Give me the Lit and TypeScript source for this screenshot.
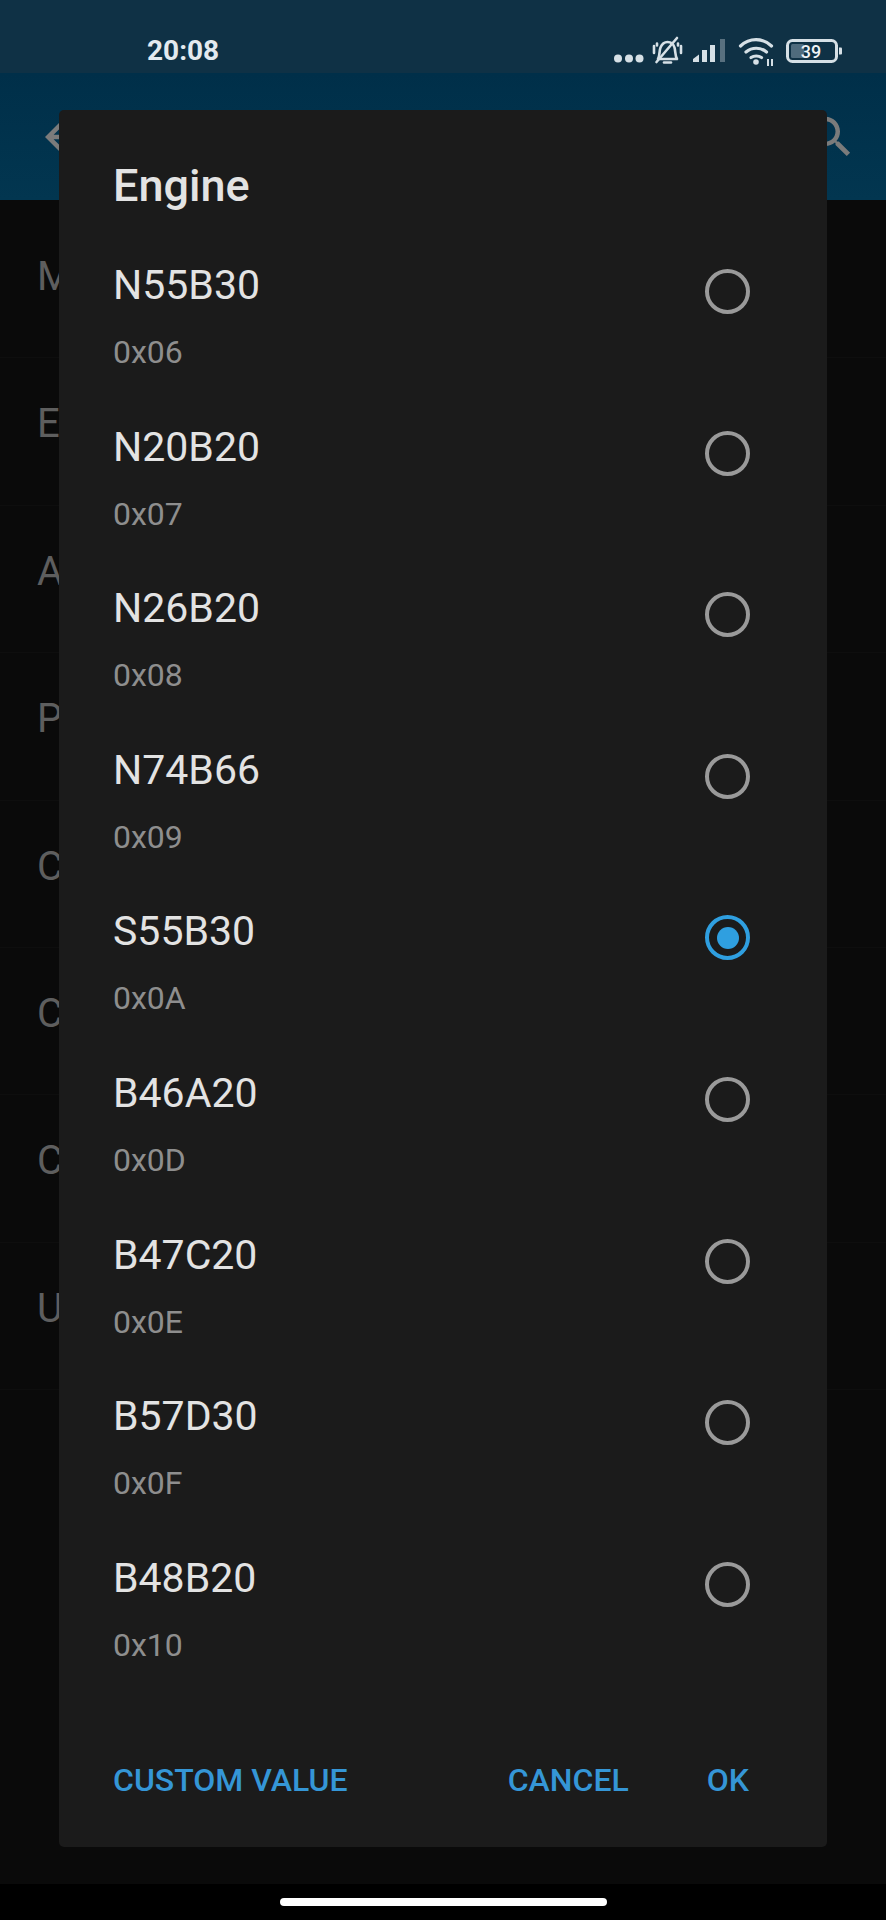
import { LitElement, html, css } from "lit";
import { customElement } from "lit/decorators.js";

const options = [
  { name: "N55B30", code: "0x06" },
  { name: "N20B20", code: "0x07" },
  { name: "N26B20", code: "0x08" },
  { name: "N74B66", code: "0x09" },
  { name: "S55B30", code: "0x0A", selected: true },
  { name: "B46A20", code: "0x0D" },
  { name: "B47C20", code: "0x0E" },
  { name: "B57D30", code: "0x0F" },
  { name: "B48B20", code: "0x10" },
];

const behind = ["M", "E", "A", "P", "C", "C", "C", "U"];

@customElement("app-root")
export class AppRoot extends LitElement {
  static styles = css`
    :host {
      display: block;
      width: 886px;
      height: 1920px;
      position: relative;
      overflow: hidden;
      background: #000;
      font-family: Roboto, "Liberation Sans", sans-serif;
    }

    .status {
      height: 73px;
      background: #0f3145;
      display: flex;
      align-items: flex-start;
      justify-content: space-between;
      padding: 30px 40px 0 147px;
      box-sizing: border-box;
      color: #e3eaef;
    }

    .time {
      font-size: 28px;
      font-weight: 700;
      line-height: 42px;
    }

    .status-icons {
      display: block;
    }

    .appbar {
      height: 127px;
      background: linear-gradient(#002f49, #023650);
      display: flex;
      align-items: center;
      justify-content: space-between;
      padding: 0 28px 0 36px;
      color: #7b7b7b;
    }

    .appbar svg {
      fill: currentColor;
    }

    .page {
      height: 1684px;
      background: #0a0a0a;
      padding-top: 11px;
      box-sizing: border-box;
    }

    .behind-row {
      height: 147.4px;
      box-sizing: border-box;
      padding: 42px 0 0 37px;
      border-bottom: 1px solid #0e0e0e;
      color: #5e5e5e;
      font-size: 40px;
      line-height: 47px;
    }

    .nav {
      height: 36px;
      background: #000;
      display: flex;
      justify-content: center;
      padding-top: 14px;
      box-sizing: border-box;
    }

    .pill {
      width: 327px;
      height: 8px;
      border-radius: 4px;
      background: #fff;
    }

    .dialog {
      position: absolute;
      left: 59px;
      top: 110px;
      width: 768px;
      height: 1737px;
      border-radius: 5px;
      background: #1b1b1b;
      display: flex;
      flex-direction: column;
      box-sizing: border-box;
      padding: 49px 0 50px 54px;
    }

    .title {
      font-size: 45px;
      font-weight: 500;
      line-height: 53px;
      color: #e3e3e3;
      margin-bottom: 47px;
    }

    .option {
      height: 161.6px;
      flex: none;
      display: flex;
      align-items: flex-start;
      justify-content: space-between;
      padding-right: 77px;
    }

    .name {
      font-size: 41px;
      line-height: 47px;
      color: #e3e3e3;
      margin-top: 3px;
    }

    .code {
      font-size: 32px;
      line-height: 36px;
      color: #8e8e8e;
      margin-top: 25px;
    }

    .radio {
      width: 45px;
      height: 45px;
      border: 4px solid #9a9a9a;
      border-radius: 50%;
      box-sizing: border-box;
      margin-top: 10px;
      display: flex;
      align-items: center;
      justify-content: center;
    }

    .radio.on {
      border-color: #2f9fe0;
    }

    .radio.on::after {
      content: "";
      width: 22px;
      height: 22px;
      border-radius: 50%;
      background: #2f9fe0;
    }

    .actions {
      margin-top: auto;
      padding-right: 78px;
      display: flex;
      align-items: center;
      color: #3596d6;
      font-size: 32px;
      font-weight: 500;
      line-height: 34px;
    }

    .spacer {
      flex: 1;
    }

    .cancel {
      margin-right: 78px;
    }
  `;

  render() {
    return html`
      <div class="status">
        <span class="time">20:08</span>
        <svg class="status-icons" width="236" height="40" viewBox="610 30 236 40" fill="none">
          <g fill="#d6e0e6">
            <circle cx="618" cy="58.5" r="4" />
            <circle cx="629" cy="58.5" r="4" />
            <circle cx="639.5" cy="58.5" r="4" />
          </g>
          <g stroke="#d6e0e6" stroke-width="2.6" stroke-linecap="round" stroke-linejoin="round">
            <path d="M658 59c2-3 1-8 2.500-11.500s4-5.500 7-5.500 6 2 7 5.500 .5 8 2.500 11.500z" />
            <path d="M664 62.500h7" />
            <path d="M656.500 62L677 38" />
            <path d="M654 46v7M657 43.500v2M681 46v7M678 43.500v2" />
          </g>
          <g fill="#d6e0e6">
            <path d="M693 62v-3l6-4.500V62z" />
            <rect x="702" y="50" width="5" height="12" />
            <rect x="710" y="45" width="5" height="17" />
          </g>
          <rect x="720" y="39" width="5" height="23" fill="#58707f" />
          <g stroke="#d6e0e6" stroke-width="3.200" stroke-linecap="round" fill="none">
            <path d="M740.500 46c9-8.500 22-8.500 31 0" />
            <path d="M746 52c6-5 14.500-5 20.500 0" />
            <path d="M751 57.500c3-2 7.500-2 10.500 0" />
          </g>
          <circle cx="756" cy="62" r="2.800" fill="#d6e0e6" />
          <path d="M768 59v7M772 59v7" stroke="#d6e0e6" stroke-width="2" />
          <rect x="787.500" y="40.500" width="49" height="21" rx="5" stroke="#d6e0e6" stroke-width="3" />
          <rect x="791" y="44" width="13" height="14" rx="1.500" fill="#4f6b7d" />
          <path d="M839 47.500h2a1 1 0 0 1 1 1v5a1 1 0 0 1-1 1h-2z" fill="#d6e0e6" />
          <text x="811" y="58" font-family="Roboto" font-size="18" font-weight="500" fill="#eef2f5" text-anchor="middle">39</text>
        </svg>
      </div>
      <div class="appbar">
        <svg width="54" height="54" viewBox="0 0 24 24">
          <path d="M20 11H7.830l5.590-5.590L12 4l-8 8 8 8 1.410-1.410L7.830 13H20v-2z" />
        </svg>
        <svg width="54" height="54" viewBox="0 0 24 24">
          <path
            d="M15.500 14h-.79l-.28-.27C15.410 12.590 16 11.110 16 9.500 16 5.910 13.090 3 9.500 3S3 5.910 3 9.500 5.910 16 9.500 16c1.610 0 3.090-.59 4.230-1.570l.27.28v.79l5 4.990L20.490 19l-4.990-5zm-6 0C7.010 14 5 11.990 5 9.500S7.010 5 9.500 5 14 7.010 14 9.500 11.990 14 9.500 14z"
          />
        </svg>
      </div>
      <div class="page">
        ${behind.map((letter) => html`<div class="behind-row">${letter}</div>`)}
      </div>
      <div class="nav"><div class="pill"></div></div>

      <div class="dialog">
        <div class="title">Engine</div>
        ${options.map(
          (o) => html`
            <div class="option">
              <div>
                <div class="name">${o.name}</div>
                <div class="code">${o.code}</div>
              </div>
              <div class="radio ${o.selected ? "on" : ""}"></div>
            </div>
          `
        )}
        <div class="actions">
          <span>CUSTOM VALUE</span>
          <span class="spacer"></span>
          <span class="cancel">CANCEL</span>
          <span>OK</span>
        </div>
      </div>
    `;
  }
}
